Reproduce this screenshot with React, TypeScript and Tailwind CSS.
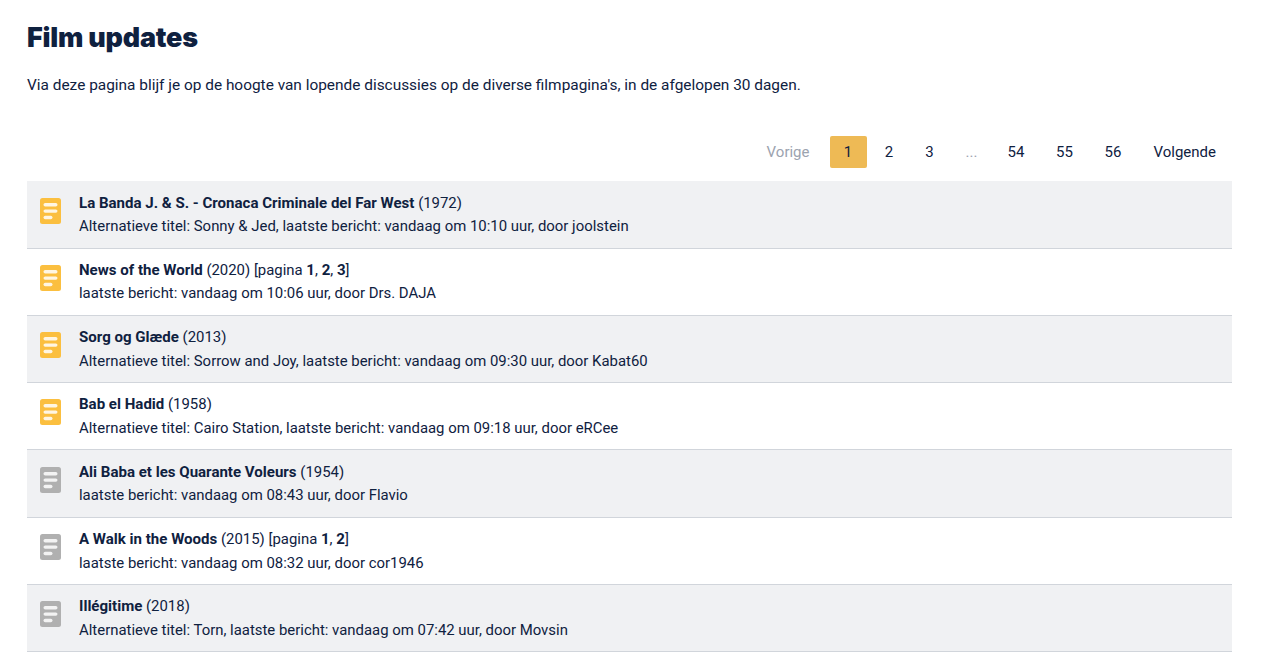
const rows = [
  { t: "La Banda J. & S. - Cronaca Criminale del Far West", y: "(1972)", s: "Alternatieve titel: Sonny & Jed, laatste bericht: vandaag om 10:10 uur, door joolstein", c: "#fbbf3f" },
  { t: "News of the World", y: "(2020)", p: ["1", "2", "3"], s: "laatste bericht: vandaag om 10:06 uur, door Drs. DAJA", c: "#fbbf3f" },
  { t: "Sorg og Glæde", y: "(2013)", s: "Alternatieve titel: Sorrow and Joy, laatste bericht: vandaag om 09:30 uur, door Kabat60", c: "#fbbf3f" },
  { t: "Bab el Hadid", y: "(1958)", s: "Alternatieve titel: Cairo Station, laatste bericht: vandaag om 09:18 uur, door eRCee", c: "#fbbf3f" },
  { t: "Ali Baba et les Quarante Voleurs", y: "(1954)", s: "laatste bericht: vandaag om 08:43 uur, door Flavio", c: "#b0b0b0" },
  { t: "A Walk in the Woods", y: "(2015)", p: ["1", "2"], s: "laatste bericht: vandaag om 08:32 uur, door cor1946", c: "#b0b0b0" },
  { t: "Illégitime", y: "(2018)", s: "Alternatieve titel: Torn, laatste bericht: vandaag om 07:42 uur, door Movsin", c: "#b0b0b0" },
];

function DocIcon({ color }: { color: string }) {
  return (
    <svg width="21" height="26" viewBox="0 0 21 26" className="shrink-0">
      <rect width="21" height="26" rx="2.5" fill={color} />
      <rect x="3.5" y="5" width="14" height="3.4" rx="1.7" fill="#fff" fillOpacity="0.85" />
      <rect x="3.5" y="11.4" width="14" height="3.4" rx="1.7" fill="#fff" fillOpacity="0.85" />
      <rect x="3.5" y="17.8" width="9" height="3.4" rx="1.7" fill="#fff" fillOpacity="0.85" />
    </svg>
  );
}

export default function App() {
  return (
    <div className="h-[653px] overflow-hidden bg-white pl-[27px] pr-[48px] font-['Roboto',sans-serif] text-[14.92px] text-[#0f213f]">
      <h1 className="pt-[20px] font-['Inter',sans-serif] text-[26.9px] font-black leading-[34px] tracking-[-0.2px] text-[#0f213f]">Film updates</h1>
      <p className="mt-[20px] text-[15.42px] leading-[22px]">Via deze pagina blijf je op de hoogte van lopende discussies op de diverse filmpagina's, in de afgelopen 30 dagen.</p>
      <nav className="mt-[39.5px] flex h-[32px] items-center justify-end pr-[16px] text-[15px] leading-[32px]">
        <span className="mr-[20px] text-[#9ca3af]">Vorige</span>
        <span className="h-[32px] w-[37px] rounded-[2px] bg-[#eeba55] text-center">1</span>
        <span className="w-[43px] pl-[2px] text-center">2</span>
        <span className="w-[40px] text-center">3</span>
        <span className="w-[45px] pr-[1px] text-center text-[#9ca3af]">...</span>
        <span className="w-[43px] text-center">54</span>
        <span className="w-[54px] text-center">55</span>
        <span className="w-[43px] text-center">56</span>
        <span className="ml-[19px]">Volgende</span>
      </nav>
      <div className="mt-[13.75px]">
        {rows.map((r, i) => (
          <div key={r.t} className={`flex h-[67.3px] items-start border-b border-[#d1d5db] pl-[13px] pt-[10.3px] ${i % 2 === 0 ? "bg-[#f0f1f3]" : "bg-white"}`}>
            <div className="pt-[6px]"><DocIcon color={r.c} /></div>
            <div className="ml-[18px] leading-[23.5px]">
              <div>
                <b className="text-[15.05px] font-bold">{r.t}</b> {r.y}
                {r.p && (
                  <span> [pagina {r.p.map((n, k) => (
                    <span key={n}>{k > 0 && ", "}<b className="text-[15.05px] font-bold">{n}</b></span>
                  ))}]</span>
                )}
              </div>
              <div>{r.s}</div>
            </div>
          </div>
        ))}
      </div>
    </div>
  );
}
